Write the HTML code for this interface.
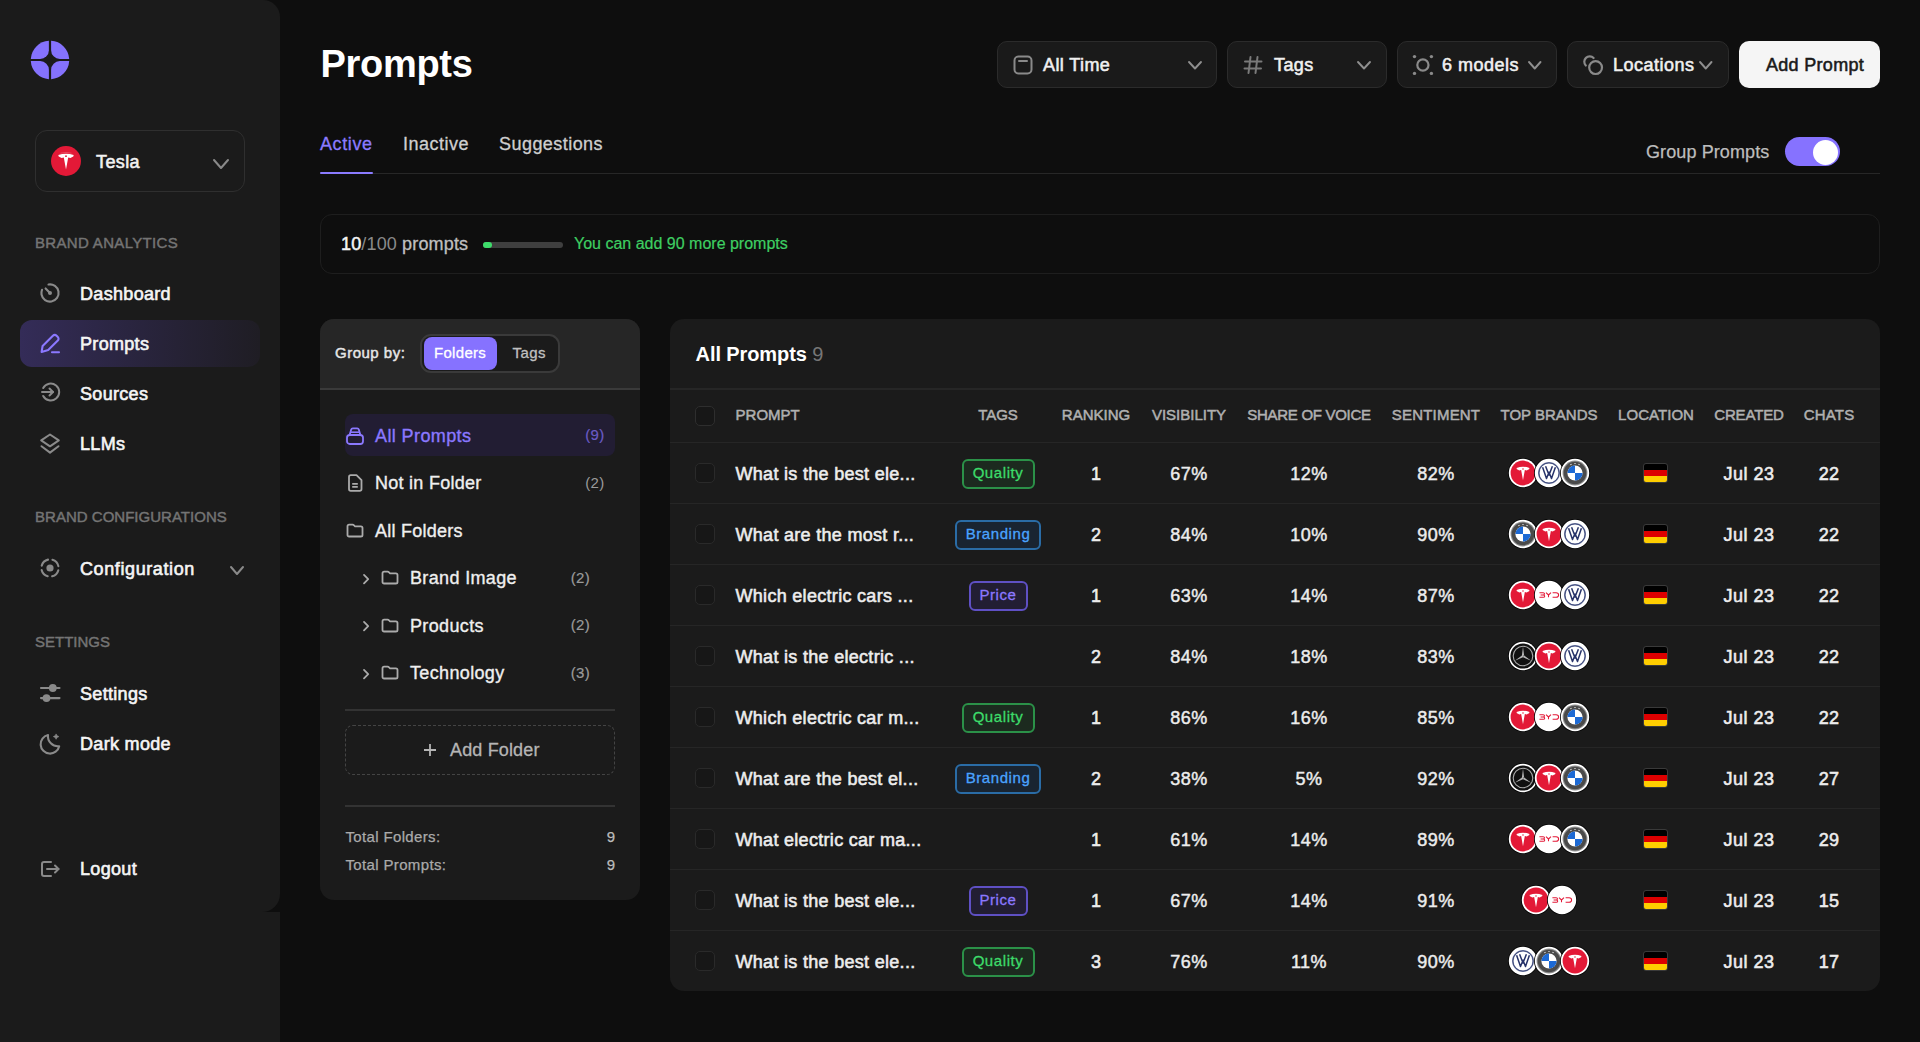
<!DOCTYPE html>
<html><head><meta charset="utf-8"><title>Prompts</title>
<style>
html,body{margin:0;padding:0}
body{width:1920px;height:1042px;background:#0e0e0e;overflow:hidden;position:relative;font-family:"Liberation Sans", sans-serif;-webkit-font-smoothing:antialiased}
svg{overflow:visible}
</style></head><body>
<div style="position:absolute;left:0px;top:912px;width:280px;height:130px;box-sizing:border-box;background:#1b1b1b"></div><div style="position:absolute;left:0px;top:0px;width:280px;height:912px;box-sizing:border-box;background:#1b1b1b;border-radius:0 17px 18px 0"></div><svg style="position:absolute;left:30px;top:40px" width="40" height="40" viewBox="0 0 40 40" fill="none"><g fill="#8572fd">
<path d="M18.9,0.8 A19.2,19.2 0 0 0 0.8,18.9 L10.2,18.9 A8.7,8.7 0 0 0 18.9,10.2 Z"/>
<path d="M21.1,0.8 A19.2,19.2 0 0 1 39.2,18.9 L29.8,18.9 A8.7,8.7 0 0 1 21.1,10.2 Z"/>
<path d="M18.9,39.2 A19.2,19.2 0 0 1 0.8,21.1 L10.2,21.1 A8.7,8.7 0 0 1 18.9,29.8 Z"/>
<path d="M21.1,39.2 A19.2,19.2 0 0 0 39.2,21.1 L29.8,21.1 A8.7,8.7 0 0 0 21.1,29.8 Z"/>
</g></svg><div style="position:absolute;left:35px;top:130px;width:210px;height:62px;box-sizing:border-box;border:1.5px solid #2f2f2f;border-radius:12px"></div><svg style="position:absolute;left:51px;top:146px" width="30" height="30" viewBox="0 0 30 30" fill="none"><circle cx="15" cy="15" r="15" fill="#e31937"/>
<path d="M7.3,8.9 Q15,6.4 22.7,8.9 L22.3,10.6 Q20.8,11.2 19.5,11.9 Q18,11.4 17.2,11.4 L15,23.5 L12.8,11.4 Q12,11.4 10.5,11.9 Q9.2,11.2 7.7,10.6 Z" fill="#fff"/>
<circle cx="15" cy="10.2" r="0.9" fill="#e31937"/>
<path d="M9.5,7.2 Q15,5.6 20.5,7.2" stroke="#fff" stroke-opacity="0.25" stroke-width="0.8"/></svg><div style="position:absolute;left:96px;top:152.76px;font-size:18px;font-weight:400;color:#f2f2f2;letter-spacing:0.4px;white-space:nowrap;line-height:1;-webkit-text-stroke:0.55px #f2f2f2;">Tesla</div><svg style="position:absolute;left:213px;top:159px" width="16" height="10" viewBox="0 0 16 10" fill="none"><polyline points="1,1 8.0,9 15,1" stroke="#8a8a8a" stroke-width="2" stroke-linecap="round" stroke-linejoin="round"/></svg><div style="position:absolute;left:35px;top:235.1px;font-size:15px;font-weight:400;color:#747474;letter-spacing:0.33px;white-space:nowrap;line-height:1;-webkit-text-stroke:0.45px #747474;">BRAND ANALYTICS</div><div style="position:absolute;left:35px;top:509.3px;font-size:15px;font-weight:400;color:#747474;letter-spacing:0.02px;white-space:nowrap;line-height:1;-webkit-text-stroke:0.45px #747474;">BRAND CONFIGURATIONS</div><div style="position:absolute;left:35px;top:634.1px;font-size:15px;font-weight:400;color:#747474;letter-spacing:0px;white-space:nowrap;line-height:1;-webkit-text-stroke:0.45px #747474;">SETTINGS</div><div style="position:absolute;left:20px;top:320px;width:240px;height:47px;box-sizing:border-box;border-radius:12px;background:linear-gradient(90deg,#342c58 0%,#2a2540 45%,#1f1d24 100%)"></div><svg style="position:absolute;left:40px;top:282.90000000000003px" width="20" height="22" viewBox="0 0 20 22" fill="none"><circle cx="10" cy="10" r="8.6" stroke="#8a8a8a" stroke-width="2.1" stroke-dasharray="45 9" stroke-linecap="round" transform="rotate(-100 10 10)"/><line x1="10" y1="10" x2="5.6" y2="5.4" stroke="#8a8a8a" stroke-width="2.1" stroke-linecap="round"/><circle cx="10" cy="10" r="2" fill="#8a8a8a"/></svg><div style="position:absolute;left:80px;top:285.36px;font-size:18px;font-weight:400;color:#f5f5f5;letter-spacing:0.32px;white-space:nowrap;line-height:1;-webkit-text-stroke:0.6px #f5f5f5;">Dashboard</div><svg style="position:absolute;left:40px;top:333.6px" width="20" height="22" viewBox="0 0 20 22" fill="none"><path d="M1.6,17.9 L2.6,12 L12.9,1.7 C13.9,0.7 15.6,0.7 16.6,1.7 L17.8,2.9 C18.8,3.9 18.8,5.6 17.8,6.6 L8.2,16 Z" stroke="#8b78ff" stroke-width="2.1" stroke-linejoin="round"/><line x1="12" y1="18.2" x2="19" y2="18.2" stroke="#8b78ff" stroke-width="2.1" stroke-linecap="round"/></svg><div style="position:absolute;left:80px;top:335.36px;font-size:18px;font-weight:400;color:#f5f5f5;letter-spacing:0.32px;white-space:nowrap;line-height:1;-webkit-text-stroke:0.6px #f5f5f5;">Prompts</div><svg style="position:absolute;left:40px;top:382.40000000000003px" width="20" height="22" viewBox="0 0 20 22" fill="none"><path d="M3.2,6 A8.5,8.5 0 1 1 3.2,14" stroke="#8a8a8a" stroke-width="2" stroke-linecap="round"/><line x1="2" y1="10" x2="13" y2="10" stroke="#8a8a8a" stroke-width="2" stroke-linecap="round"/><polyline points="9.5,6.5 13,10 9.5,13.5" stroke="#8a8a8a" stroke-width="2" stroke-linecap="round" stroke-linejoin="round"/></svg><div style="position:absolute;left:80px;top:385.36px;font-size:18px;font-weight:400;color:#f5f5f5;letter-spacing:0.32px;white-space:nowrap;line-height:1;-webkit-text-stroke:0.6px #f5f5f5;">Sources</div><svg style="position:absolute;left:40px;top:432.6px" width="20" height="22" viewBox="0 0 20 22" fill="none"><path d="M10,1.5 L18.8,7.4 L10,13.3 L1.2,7.4 Z" stroke="#8a8a8a" stroke-width="2" stroke-linejoin="round"/><polyline points="1.5,13.2 10,19.6 18.5,13.2" stroke="#8a8a8a" stroke-width="2" stroke-linejoin="round" stroke-linecap="round"/></svg><div style="position:absolute;left:80px;top:435.36px;font-size:18px;font-weight:400;color:#f5f5f5;letter-spacing:0.32px;white-space:nowrap;line-height:1;-webkit-text-stroke:0.6px #f5f5f5;">LLMs</div><svg style="position:absolute;left:40px;top:557.6px" width="20" height="22" viewBox="0 0 20 22" fill="none"><circle cx="10" cy="10" r="8.6" stroke="#8a8a8a" stroke-width="2.1" stroke-dasharray="9 4.5" stroke-dashoffset="11.25" stroke-linecap="round"/><circle cx="10" cy="10" r="3.6" fill="#8a8a8a"/></svg><div style="position:absolute;left:80px;top:560.36px;font-size:18px;font-weight:400;color:#f5f5f5;letter-spacing:0.6px;white-space:nowrap;line-height:1;-webkit-text-stroke:0.6px #f5f5f5;">Configuration</div><svg style="position:absolute;left:40px;top:683.2px" width="20" height="22" viewBox="0 0 20 22" fill="none"><line x1="1" y1="5" x2="19.5" y2="5" stroke="#8a8a8a" stroke-width="2.1" stroke-linecap="round"/><line x1="1" y1="15.1" x2="19.5" y2="15.1" stroke="#8a8a8a" stroke-width="2.1" stroke-linecap="round"/><circle cx="12.8" cy="5" r="3.9" fill="#8a8a8a"/><circle cx="6.5" cy="15.1" r="3.9" fill="#8a8a8a"/></svg><div style="position:absolute;left:80px;top:685.36px;font-size:18px;font-weight:400;color:#f5f5f5;letter-spacing:0.32px;white-space:nowrap;line-height:1;-webkit-text-stroke:0.6px #f5f5f5;">Settings</div><svg style="position:absolute;left:40px;top:732.8000000000001px" width="20" height="22" viewBox="0 0 20 22" fill="none"><path d="M8,2 A9.4,9.4 0 1 0 19.2,13.2 A10,10 0 0 1 8,2 Z" stroke="#8a8a8a" stroke-width="2.1" stroke-linejoin="round"/><path d="M16.1,0.9 Q16.6,3.1 18.9,3.6 Q16.6,4.1 16.1,6.3 Q15.6,4.1 13.3,3.6 Q15.6,3.1 16.1,0.9 Z" fill="#8a8a8a" stroke="#8a8a8a" stroke-width="0.6" stroke-linejoin="round"/></svg><div style="position:absolute;left:80px;top:735.36px;font-size:18px;font-weight:400;color:#f5f5f5;letter-spacing:0.32px;white-space:nowrap;line-height:1;-webkit-text-stroke:0.6px #f5f5f5;">Dark mode</div><svg style="position:absolute;left:40px;top:858.6px" width="20" height="22" viewBox="0 0 20 22" fill="none"><path d="M11,3 L4,3 C2.9,3 2,3.9 2,5 L2,15 C2,16.1 2.9,17 4,17 L11,17" stroke="#8a8a8a" stroke-width="2" stroke-linecap="round"/><line x1="7" y1="10" x2="18.5" y2="10" stroke="#8a8a8a" stroke-width="2" stroke-linecap="round"/><polyline points="15,6.5 18.5,10 15,13.5" stroke="#8a8a8a" stroke-width="2" stroke-linecap="round" stroke-linejoin="round"/></svg><div style="position:absolute;left:80px;top:860.36px;font-size:18px;font-weight:400;color:#f5f5f5;letter-spacing:0.32px;white-space:nowrap;line-height:1;-webkit-text-stroke:0.6px #f5f5f5;">Logout</div><svg style="position:absolute;left:230px;top:566px" width="14" height="9" viewBox="0 0 14 9" fill="none"><polyline points="1,1 7.0,8 13,1" stroke="#8a8a8a" stroke-width="2" stroke-linecap="round" stroke-linejoin="round"/></svg><div style="position:absolute;left:320.5px;top:44.83px;font-size:38px;font-weight:700;color:#ffffff;letter-spacing:-0.3px;white-space:nowrap;line-height:1;">Prompts</div><div style="position:absolute;left:997px;top:41px;width:220px;height:47px;box-sizing:border-box;background:#1a1a1a;border:1.5px solid #2b2b2b;border-radius:10px"></div><div style="position:absolute;left:1227px;top:41px;width:160px;height:47px;box-sizing:border-box;background:#1a1a1a;border:1.5px solid #2b2b2b;border-radius:10px"></div><div style="position:absolute;left:1397px;top:41px;width:160px;height:47px;box-sizing:border-box;background:#1a1a1a;border:1.5px solid #2b2b2b;border-radius:10px"></div><div style="position:absolute;left:1567px;top:41px;width:162px;height:47px;box-sizing:border-box;background:#1a1a1a;border:1.5px solid #2b2b2b;border-radius:10px"></div><div style="position:absolute;left:1739px;top:41px;width:141px;height:47px;box-sizing:border-box;background:#f5f5f5;border-radius:10px"></div><svg style="position:absolute;left:1013px;top:55px" width="20" height="20" viewBox="0 0 20 20" fill="none"><rect x="1.5" y="1.5" width="17" height="17" rx="4" stroke="#8a8a8a" stroke-width="2"/><line x1="6" y1="6" x2="14" y2="6" stroke="#8a8a8a" stroke-width="2" stroke-linecap="round"/></svg><svg style="position:absolute;left:1243px;top:55px" width="20" height="20" viewBox="0 0 20 20" fill="none"><path d="M7.5,2 L5.5,18 M14.5,2 L12.5,18 M2,6.5 L18.5,6.5 M1.5,13.5 L18,13.5" stroke="#7a7a7a" stroke-width="2" stroke-linecap="round"/></svg><svg style="position:absolute;left:1413px;top:55px" width="20" height="20" viewBox="0 0 20 20" fill="none"><circle cx="9.9" cy="10" r="5.6" stroke="#8a8a8a" stroke-width="2.2"/><circle cx="1.5" cy="1.6" r="1.7" fill="#8a8a8a"/><circle cx="18.4" cy="1.6" r="1.7" fill="#8a8a8a"/><circle cx="1.5" cy="18.4" r="1.7" fill="#8a8a8a"/><circle cx="18.4" cy="18.4" r="1.7" fill="#8a8a8a"/></svg><svg style="position:absolute;left:1583px;top:55px" width="20" height="20" viewBox="0 0 20 20" fill="none"><path d="M10.6,3 A5.4,5.4 0 1 0 2.8,10.5" stroke="#8a8a8a" stroke-width="2.2" stroke-linecap="round"/><circle cx="12.6" cy="12.6" r="6.4" stroke="#8a8a8a" stroke-width="2.2"/></svg><div style="position:absolute;left:1043px;top:55.76px;font-size:18px;font-weight:400;color:#f0f0f0;letter-spacing:0.4px;white-space:nowrap;line-height:1;-webkit-text-stroke:0.55px #f0f0f0;">All Time</div><div style="position:absolute;left:1274px;top:55.76px;font-size:18px;font-weight:400;color:#f0f0f0;letter-spacing:0.4px;white-space:nowrap;line-height:1;-webkit-text-stroke:0.55px #f0f0f0;">Tags</div><div style="position:absolute;left:1442px;top:55.76px;font-size:18px;font-weight:400;color:#f0f0f0;letter-spacing:0.5px;white-space:nowrap;line-height:1;-webkit-text-stroke:0.55px #f0f0f0;">6 models</div><div style="position:absolute;left:1613px;top:55.76px;font-size:18px;font-weight:400;color:#f0f0f0;letter-spacing:0.5px;white-space:nowrap;line-height:1;-webkit-text-stroke:0.55px #f0f0f0;">Locations</div><div style="position:absolute;left:1766px;top:55.76px;font-size:18px;font-weight:400;color:#1a1a1a;letter-spacing:0.3px;white-space:nowrap;line-height:1;-webkit-text-stroke:0.55px #1a1a1a;">Add Prompt</div><svg style="position:absolute;left:1187.5px;top:60.5px" width="14" height="8.5" viewBox="0 0 14 8.5" fill="none"><polyline points="1,1 7.0,7.5 13,1" stroke="#8f8f8f" stroke-width="1.9" stroke-linecap="round" stroke-linejoin="round"/></svg><svg style="position:absolute;left:1357px;top:60.5px" width="14" height="8.5" viewBox="0 0 14 8.5" fill="none"><polyline points="1,1 7.0,7.5 13,1" stroke="#8f8f8f" stroke-width="1.9" stroke-linecap="round" stroke-linejoin="round"/></svg><svg style="position:absolute;left:1527.5px;top:60.5px" width="13.5" height="8.5" viewBox="0 0 13.5 8.5" fill="none"><polyline points="1,1 6.75,7.5 12.5,1" stroke="#8f8f8f" stroke-width="1.9" stroke-linecap="round" stroke-linejoin="round"/></svg><svg style="position:absolute;left:1699px;top:60.5px" width="13.5" height="8.5" viewBox="0 0 13.5 8.5" fill="none"><polyline points="1,1 6.75,7.5 12.5,1" stroke="#8f8f8f" stroke-width="1.9" stroke-linecap="round" stroke-linejoin="round"/></svg><div style="position:absolute;left:320px;top:134.96px;font-size:18px;font-weight:400;color:#8b7bff;letter-spacing:0.6px;white-space:nowrap;line-height:1;-webkit-text-stroke:0.3px #8b7bff;">Active</div><div style="position:absolute;left:403px;top:134.96px;font-size:18px;font-weight:400;color:#cfcfcf;letter-spacing:0.5px;white-space:nowrap;line-height:1;-webkit-text-stroke:0.3px #cfcfcf;">Inactive</div><div style="position:absolute;left:499px;top:134.96px;font-size:18px;font-weight:400;color:#cfcfcf;letter-spacing:0.45px;white-space:nowrap;line-height:1;-webkit-text-stroke:0.3px #cfcfcf;">Suggestions</div><div style="position:absolute;left:320px;top:172.5px;width:1560px;height:1.5px;box-sizing:border-box;background:#272727"></div><div style="position:absolute;left:320px;top:171.7px;width:53px;height:2.5px;box-sizing:border-box;background:#8b7bff;border-radius:2px"></div><div style="position:absolute;left:1646px;top:142.66px;font-size:18px;font-weight:400;color:#bdbdbd;letter-spacing:0.1px;white-space:nowrap;line-height:1;-webkit-text-stroke:0.25px #bdbdbd;">Group Prompts</div><div style="position:absolute;left:1785px;top:137px;width:55px;height:29px;box-sizing:border-box;background:#8672ff;border-radius:15px"></div><div style="position:absolute;left:1813px;top:139.5px;width:25px;height:25px;box-sizing:border-box;background:#fff;border-radius:50%"></div><div style="position:absolute;left:320px;top:214px;width:1560px;height:60px;box-sizing:border-box;border:1.5px solid #1e1e1e;border-radius:12px;background:#0e0e0e"></div><div style="position:absolute;left:341px;top:234.76px;font-size:18px;font-weight:400;color:#fff;letter-spacing:0.15px;white-space:nowrap;line-height:1;"><span style="color:#f5f5f5;-webkit-text-stroke:0.5px #f5f5f5">10</span><span style="color:#8a8a8a">/100</span><span style="color:#c0c0c0;-webkit-text-stroke:0.3px #c0c0c0"> prompts</span></div><div style="position:absolute;left:483px;top:241.5px;width:80px;height:6px;box-sizing:border-box;background:#3f3f3f;border-radius:3px"></div><div style="position:absolute;left:483px;top:241.5px;width:9px;height:6px;box-sizing:border-box;background:#3ddc6a;border-radius:3px"></div><div style="position:absolute;left:574px;top:235.96px;font-size:16px;font-weight:400;color:#3ecf62;letter-spacing:0px;white-space:nowrap;line-height:1;-webkit-text-stroke:0.2px #3ecf62;">You can add 90 more prompts</div><div style="position:absolute;left:320px;top:319px;width:320px;height:581px;box-sizing:border-box;background:#1b1b1b;border-radius:14px;overflow:hidden"></div><div style="position:absolute;left:320px;top:319px;width:320px;height:69px;box-sizing:border-box;background:#262626;border-radius:14px 14px 0 0"></div><div style="position:absolute;left:320px;top:387.5px;width:320px;height:2px;box-sizing:border-box;background:#3a3a3a"></div><div style="position:absolute;left:335px;top:344.6px;font-size:15px;font-weight:400;color:#e6e6e6;letter-spacing:0.5px;white-space:nowrap;line-height:1;-webkit-text-stroke:0.45px #e6e6e6;">Group by:</div><div style="position:absolute;left:420px;top:334px;width:140px;height:39px;box-sizing:border-box;background:#1b1b1b;border:2px solid #3a3a3a;border-radius:11px"></div><div style="position:absolute;left:424px;top:337px;width:73px;height:33px;box-sizing:border-box;background:#8672ff;border-radius:8px"></div><div style="position:absolute;left:434px;top:345.3px;font-size:15px;font-weight:400;color:#ffffff;letter-spacing:0.3px;white-space:nowrap;line-height:1;-webkit-text-stroke:0.3px #ffffff;">Folders</div><div style="position:absolute;left:512.5px;top:345.3px;font-size:15px;font-weight:400;color:#c0c0c0;letter-spacing:0.4px;white-space:nowrap;line-height:1;-webkit-text-stroke:0.3px #c0c0c0;">Tags</div><div style="position:absolute;left:345px;top:414px;width:270px;height:42px;box-sizing:border-box;background:#221d33;border-radius:8px"></div><svg style="position:absolute;left:346px;top:427px" width="18" height="18" viewBox="0 0 18 18" fill="none"><path d="M3.6,8 L5.2,2.6 C5.4,1.9 6,1.4 6.8,1.4 L11.2,1.4 C12,1.4 12.6,1.9 12.8,2.6 L14.4,8" stroke="#8b78ff" stroke-width="1.8" stroke-linejoin="round"/><line x1="4.4" y1="5.2" x2="13.6" y2="5.2" stroke="#8b78ff" stroke-width="1.6"/><rect x="1" y="8" width="16" height="9" rx="2.8" stroke="#8b78ff" stroke-width="1.8"/></svg><div style="position:absolute;left:375px;top:426.76px;font-size:18px;font-weight:400;color:#8b78ff;letter-spacing:0.4px;white-space:nowrap;line-height:1;-webkit-text-stroke:0.35px #8b78ff;">All Prompts</div><div style="position:absolute;left:404.5px;width:200px;text-align:right;top:427.3px;font-size:15px;font-weight:400;color:#6a5bc5;letter-spacing:0.3px;white-space:nowrap;line-height:1;-webkit-text-stroke:0.2px #6a5bc5;">(9)</div><svg style="position:absolute;left:347px;top:474px" width="16" height="18" viewBox="0 0 16 18" fill="none"><path d="M2,3 C2,2 2.8,1.2 3.8,1.2 L9.5,1.2 L14.5,6.2 L14.5,15 C14.5,16 13.7,16.8 12.7,16.8 L3.8,16.8 C2.8,16.8 2,16 2,15 Z" stroke="#ababab" stroke-width="1.8" stroke-linejoin="round"/><path d="M5.2,9.8 L10.8,9.8 M5.2,12.8 L10.8,12.8" stroke="#ababab" stroke-width="1.7"/></svg><div style="position:absolute;left:375px;top:473.76px;font-size:18px;font-weight:400;color:#efefef;letter-spacing:0.27px;white-space:nowrap;line-height:1;-webkit-text-stroke:0.35px #efefef;">Not in Folder</div><div style="position:absolute;left:404.5px;width:200px;text-align:right;top:474.8px;font-size:15px;font-weight:400;color:#9a9a9a;letter-spacing:0.3px;white-space:nowrap;line-height:1;">(2)</div><svg style="position:absolute;left:346px;top:522px" width="18" height="16" viewBox="0 0 18 16" fill="none"><path d="M1.5,4.3 C1.5,3.4 2.2,2.7 3.1,2.7 L6.6,2.7 C7.2,2.7 7.6,2.9 8,3.3 L8.8,4.3 L14.9,4.3 C15.8,4.3 16.5,5 16.5,5.9 L16.5,12.9 C16.5,13.8 15.8,14.5 14.9,14.5 L3.1,14.5 C2.2,14.5 1.5,13.8 1.5,12.9 Z" stroke="#ababab" stroke-width="1.8" stroke-linejoin="round"/></svg><div style="position:absolute;left:375px;top:521.76px;font-size:18px;font-weight:400;color:#efefef;letter-spacing:0.25px;white-space:nowrap;line-height:1;-webkit-text-stroke:0.35px #efefef;">All Folders</div><svg style="position:absolute;left:361px;top:571.6999999999999px" width="10" height="14" viewBox="0 0 10 14" fill="none"><polyline points="3,2.9 7.2,7.1 3,11.3" stroke="#ababab" stroke-width="1.8" stroke-linecap="round" stroke-linejoin="round"/></svg><svg style="position:absolute;left:381px;top:569.3px" width="18" height="16" viewBox="0 0 18 16" fill="none"><path d="M1.5,4.3 C1.5,3.4 2.2,2.7 3.1,2.7 L6.6,2.7 C7.2,2.7 7.6,2.9 8,3.3 L8.8,4.3 L14.9,4.3 C15.8,4.3 16.5,5 16.5,5.9 L16.5,12.9 C16.5,13.8 15.8,14.5 14.9,14.5 L3.1,14.5 C2.2,14.5 1.5,13.8 1.5,12.9 Z" stroke="#ababab" stroke-width="1.8" stroke-linejoin="round"/></svg><div style="position:absolute;left:410px;top:569.06px;font-size:18px;font-weight:400;color:#efefef;letter-spacing:0.35px;white-space:nowrap;line-height:1;-webkit-text-stroke:0.35px #efefef;">Brand Image</div><div style="position:absolute;left:390px;width:200px;text-align:right;top:569.6px;font-size:15px;font-weight:400;color:#9a9a9a;letter-spacing:0.3px;white-space:nowrap;line-height:1;-webkit-text-stroke:0.2px #9a9a9a;">(2)</div><svg style="position:absolute;left:361px;top:619.1999999999999px" width="10" height="14" viewBox="0 0 10 14" fill="none"><polyline points="3,2.9 7.2,7.1 3,11.3" stroke="#ababab" stroke-width="1.8" stroke-linecap="round" stroke-linejoin="round"/></svg><svg style="position:absolute;left:381px;top:616.8px" width="18" height="16" viewBox="0 0 18 16" fill="none"><path d="M1.5,4.3 C1.5,3.4 2.2,2.7 3.1,2.7 L6.6,2.7 C7.2,2.7 7.6,2.9 8,3.3 L8.8,4.3 L14.9,4.3 C15.8,4.3 16.5,5 16.5,5.9 L16.5,12.9 C16.5,13.8 15.8,14.5 14.9,14.5 L3.1,14.5 C2.2,14.5 1.5,13.8 1.5,12.9 Z" stroke="#ababab" stroke-width="1.8" stroke-linejoin="round"/></svg><div style="position:absolute;left:410px;top:616.56px;font-size:18px;font-weight:400;color:#efefef;letter-spacing:0.35px;white-space:nowrap;line-height:1;-webkit-text-stroke:0.35px #efefef;">Products</div><div style="position:absolute;left:390px;width:200px;text-align:right;top:617.1px;font-size:15px;font-weight:400;color:#9a9a9a;letter-spacing:0.3px;white-space:nowrap;line-height:1;-webkit-text-stroke:0.2px #9a9a9a;">(2)</div><svg style="position:absolute;left:361px;top:666.6999999999999px" width="10" height="14" viewBox="0 0 10 14" fill="none"><polyline points="3,2.9 7.2,7.1 3,11.3" stroke="#ababab" stroke-width="1.8" stroke-linecap="round" stroke-linejoin="round"/></svg><svg style="position:absolute;left:381px;top:664.3px" width="18" height="16" viewBox="0 0 18 16" fill="none"><path d="M1.5,4.3 C1.5,3.4 2.2,2.7 3.1,2.7 L6.6,2.7 C7.2,2.7 7.6,2.9 8,3.3 L8.8,4.3 L14.9,4.3 C15.8,4.3 16.5,5 16.5,5.9 L16.5,12.9 C16.5,13.8 15.8,14.5 14.9,14.5 L3.1,14.5 C2.2,14.5 1.5,13.8 1.5,12.9 Z" stroke="#ababab" stroke-width="1.8" stroke-linejoin="round"/></svg><div style="position:absolute;left:410px;top:664.06px;font-size:18px;font-weight:400;color:#efefef;letter-spacing:0.35px;white-space:nowrap;line-height:1;-webkit-text-stroke:0.35px #efefef;">Technology</div><div style="position:absolute;left:390px;width:200px;text-align:right;top:664.6px;font-size:15px;font-weight:400;color:#9a9a9a;letter-spacing:0.3px;white-space:nowrap;line-height:1;-webkit-text-stroke:0.2px #9a9a9a;">(3)</div><div style="position:absolute;left:345px;top:709px;width:270px;height:1.5px;box-sizing:border-box;background:#333"></div><div style="position:absolute;left:345px;top:725px;width:270px;height:50px;box-sizing:border-box;border:1.5px dashed #444;border-radius:8px"></div><svg style="position:absolute;left:423px;top:743px" width="14" height="14" viewBox="0 0 14 14" fill="none"><path d="M7,1 L7,13 M1,7 L13,7" stroke="#b5b5b5" stroke-width="1.8"/></svg><div style="position:absolute;left:450px;top:741.26px;font-size:18px;font-weight:400;color:#b5b5b5;letter-spacing:0.15px;white-space:nowrap;line-height:1;-webkit-text-stroke:0.3px #b5b5b5;">Add Folder</div><div style="position:absolute;left:345px;top:805px;width:270px;height:1.5px;box-sizing:border-box;background:#333"></div><div style="position:absolute;left:345.5px;top:829.3px;font-size:15px;font-weight:400;color:#aaaaaa;letter-spacing:0.35px;white-space:nowrap;line-height:1;-webkit-text-stroke:0.25px #aaaaaa;">Total Folders:</div><div style="position:absolute;left:345.5px;top:856.7px;font-size:15px;font-weight:400;color:#aaaaaa;letter-spacing:0.35px;white-space:nowrap;line-height:1;-webkit-text-stroke:0.25px #aaaaaa;">Total Prompts:</div><div style="position:absolute;left:415px;width:200px;text-align:right;top:829.3px;font-size:15px;font-weight:400;color:#bbbbbb;letter-spacing:0px;white-space:nowrap;line-height:1;-webkit-text-stroke:0.25px #bbbbbb;">9</div><div style="position:absolute;left:415px;width:200px;text-align:right;top:856.7px;font-size:15px;font-weight:400;color:#bbbbbb;letter-spacing:0px;white-space:nowrap;line-height:1;-webkit-text-stroke:0.25px #bbbbbb;">9</div><div style="position:absolute;left:670px;top:319px;width:1210px;height:672px;box-sizing:border-box;background:#1b1b1b;border-radius:14px"></div><div style="position:absolute;left:695.6px;top:344.27px;font-size:20px;font-weight:700;color:#ffffff;letter-spacing:-0.1px;white-space:nowrap;line-height:1;">All Prompts <span style="color:#767676;font-weight:400">9</span></div><div style="position:absolute;left:670px;top:388px;width:1210px;height:2px;box-sizing:border-box;background:#262626"></div><div style="position:absolute;left:695px;top:406px;width:20px;height:20px;box-sizing:border-box;border:1.5px solid #2e2e2e;border-radius:5px;background:#171717"></div><div style="position:absolute;left:735.6px;top:407.1px;font-size:15px;font-weight:400;color:#b0b0b0;letter-spacing:0px;white-space:nowrap;line-height:1;-webkit-text-stroke:0.5px #b0b0b0;">PROMPT</div><div style="position:absolute;left:898.0px;width:200px;text-align:center;top:407.1px;font-size:15px;font-weight:400;color:#b0b0b0;letter-spacing:0px;white-space:nowrap;line-height:1;-webkit-text-stroke:0.5px #b0b0b0;">TAGS</div><div style="position:absolute;left:996.0px;width:200px;text-align:center;top:407.1px;font-size:15px;font-weight:400;color:#b0b0b0;letter-spacing:0px;white-space:nowrap;line-height:1;-webkit-text-stroke:0.5px #b0b0b0;">RANKING</div><div style="position:absolute;left:1089.0px;width:200px;text-align:center;top:407.1px;font-size:15px;font-weight:400;color:#b0b0b0;letter-spacing:0px;white-space:nowrap;line-height:1;-webkit-text-stroke:0.5px #b0b0b0;">VISIBILITY</div><div style="position:absolute;left:1209.0px;width:200px;text-align:center;top:407.1px;font-size:15px;font-weight:400;color:#b0b0b0;letter-spacing:-0.3px;white-space:nowrap;line-height:1;-webkit-text-stroke:0.5px #b0b0b0;">SHARE OF VOICE</div><div style="position:absolute;left:1336.0px;width:200px;text-align:center;top:407.1px;font-size:15px;font-weight:400;color:#b0b0b0;letter-spacing:0.2px;white-space:nowrap;line-height:1;-webkit-text-stroke:0.5px #b0b0b0;">SENTIMENT</div><div style="position:absolute;left:1449.0px;width:200px;text-align:center;top:407.1px;font-size:15px;font-weight:400;color:#b0b0b0;letter-spacing:0px;white-space:nowrap;line-height:1;-webkit-text-stroke:0.5px #b0b0b0;">TOP BRANDS</div><div style="position:absolute;left:1556.0px;width:200px;text-align:center;top:407.1px;font-size:15px;font-weight:400;color:#b0b0b0;letter-spacing:0.05px;white-space:nowrap;line-height:1;-webkit-text-stroke:0.5px #b0b0b0;">LOCATION</div><div style="position:absolute;left:1649.0px;width:200px;text-align:center;top:407.1px;font-size:15px;font-weight:400;color:#b0b0b0;letter-spacing:-0.15px;white-space:nowrap;line-height:1;-webkit-text-stroke:0.5px #b0b0b0;">CREATED</div><div style="position:absolute;left:1729.0px;width:200px;text-align:center;top:407.1px;font-size:15px;font-weight:400;color:#b0b0b0;letter-spacing:0.2px;white-space:nowrap;line-height:1;-webkit-text-stroke:0.5px #b0b0b0;">CHATS</div><div style="position:absolute;left:670px;top:441.5px;width:1210px;height:1.5px;box-sizing:border-box;background:#262626"></div><div style="position:absolute;left:695px;top:463px;width:20px;height:20px;box-sizing:border-box;border:1.5px solid #2a2a2a;border-radius:5px;background:#171717"></div><div style="position:absolute;left:735.5px;top:464.76px;font-size:18px;font-weight:400;color:#ededed;letter-spacing:0.3px;white-space:nowrap;line-height:1;-webkit-text-stroke:0.55px #ededed;">What is the best ele...</div><div style="position:absolute;left:961.5px;top:458.5px;width:73px;height:30px;box-sizing:border-box;border:2px solid #2b9148;background:#1c2a1f;border-radius:6px"></div><div style="position:absolute;left:898.0px;width:200px;text-align:center;top:464.9px;font-size:15px;font-weight:400;color:#3ddc6a;letter-spacing:0.58px;white-space:nowrap;line-height:1;-webkit-text-stroke:0.3px #3ddc6a;">Quality</div><div style="position:absolute;left:996.0px;width:200px;text-align:center;top:464.76px;font-size:18px;font-weight:400;color:#ededed;letter-spacing:0px;white-space:nowrap;line-height:1;-webkit-text-stroke:0.55px #ededed;">1</div><div style="position:absolute;left:1089.0px;width:200px;text-align:center;top:464.76px;font-size:18px;font-weight:400;color:#ededed;letter-spacing:0.45px;white-space:nowrap;line-height:1;-webkit-text-stroke:0.45px #ededed;">67%</div><div style="position:absolute;left:1209.0px;width:200px;text-align:center;top:464.76px;font-size:18px;font-weight:400;color:#ededed;letter-spacing:0.45px;white-space:nowrap;line-height:1;-webkit-text-stroke:0.45px #ededed;">12%</div><div style="position:absolute;left:1336.0px;width:200px;text-align:center;top:464.76px;font-size:18px;font-weight:400;color:#ededed;letter-spacing:0.45px;white-space:nowrap;line-height:1;-webkit-text-stroke:0.45px #ededed;">82%</div><svg style="position:absolute;left:1508.2px;top:458px;z-index:0" width="30" height="30" viewBox="0 0 30 30" fill="none"><circle cx="15" cy="15" r="15" fill="#000"/><circle cx="15" cy="15" r="14.2" fill="#fff"/><circle cx="15" cy="15" r="12.4" fill="#e31937"/>
<g transform="translate(15 15) scale(0.84) translate(-15 -15)"><path d="M7.3,8.9 Q15,6.4 22.7,8.9 L22.3,10.6 Q20.8,11.2 19.5,11.9 Q18,11.4 17.2,11.4 L15,23.5 L12.8,11.4 Q12,11.4 10.5,11.9 Q9.2,11.2 7.7,10.6 Z" fill="#fff"/>
<circle cx="15" cy="10.2" r="0.9" fill="#e31937"/></g></svg><svg style="position:absolute;left:1534.0px;top:458px;z-index:1" width="30" height="30" viewBox="0 0 30 30" fill="none"><circle cx="15" cy="15" r="15" fill="#000"/><circle cx="15" cy="15" r="14.2" fill="#fff"/><circle cx="15" cy="15" r="10.2" stroke="#8a93b5" stroke-width="1.6"/><circle cx="15" cy="15" r="10.2" stroke="#27336a" stroke-width="0.8"/>
<path d="M8.6,9.2 L12.5,20.5 L15,14.2 L17.5,20.5 L21.4,9.2 M11.6,8.2 L15,17 L18.4,8.2" stroke="#27336a" stroke-width="1.5" stroke-linejoin="round"/></svg><svg style="position:absolute;left:1559.8px;top:458px;z-index:2" width="30" height="30" viewBox="0 0 30 30" fill="none"><circle cx="15" cy="15" r="15" fill="#000"/><circle cx="15" cy="15" r="14.2" fill="#fff"/><circle cx="15" cy="15" r="12.4" fill="#8c8c8c"/><circle cx="15" cy="15" r="11.3" fill="#4a4a4a"/>
<path d="M10.3,6.9 l1.3,-0.8 M14.4,5.5 l1.2,0 M18.4,6.1 l1.3,0.8" stroke="#e5e5e5" stroke-width="1.1"/>
<circle cx="15" cy="15" r="7.6" fill="#fff"/>
<path d="M15,15 L15,7.4 A7.6,7.6 0 0 0 7.4,15 Z" fill="#1c69d4"/><path d="M15,15 L15,22.6 A7.6,7.6 0 0 0 22.6,15 Z" fill="#1c69d4"/></svg><div style="position:absolute;left:1643px;top:463px;width:25px;height:20px;box-sizing:border-box;border:1px solid #3a3a3a;border-radius:3px;overflow:hidden;background:linear-gradient(#000 0 33.3%,#dd0000 33.3% 66.6%,#ffce00 66.6%)"></div><div style="position:absolute;left:1649.0px;width:200px;text-align:center;top:464.76px;font-size:18px;font-weight:400;color:#ededed;letter-spacing:0.5px;white-space:nowrap;line-height:1;-webkit-text-stroke:0.55px #ededed;">Jul 23</div><div style="position:absolute;left:1729.0px;width:200px;text-align:center;top:464.76px;font-size:18px;font-weight:400;color:#ededed;letter-spacing:0.3px;white-space:nowrap;line-height:1;-webkit-text-stroke:0.55px #ededed;">22</div><div style="position:absolute;left:670px;top:502.5px;width:1210px;height:1.5px;box-sizing:border-box;background:#262626"></div><div style="position:absolute;left:695px;top:524px;width:20px;height:20px;box-sizing:border-box;border:1.5px solid #2a2a2a;border-radius:5px;background:#171717"></div><div style="position:absolute;left:735.5px;top:525.76px;font-size:18px;font-weight:400;color:#ededed;letter-spacing:0.3px;white-space:nowrap;line-height:1;-webkit-text-stroke:0.55px #ededed;">What are the most r...</div><div style="position:absolute;left:955.0px;top:519.5px;width:86px;height:30px;box-sizing:border-box;border:2px solid #2a6ca6;background:#192431;border-radius:6px"></div><div style="position:absolute;left:898.0px;width:200px;text-align:center;top:525.9px;font-size:15px;font-weight:400;color:#4aa3ff;letter-spacing:0.58px;white-space:nowrap;line-height:1;-webkit-text-stroke:0.3px #4aa3ff;">Branding</div><div style="position:absolute;left:996.0px;width:200px;text-align:center;top:525.76px;font-size:18px;font-weight:400;color:#ededed;letter-spacing:0px;white-space:nowrap;line-height:1;-webkit-text-stroke:0.55px #ededed;">2</div><div style="position:absolute;left:1089.0px;width:200px;text-align:center;top:525.76px;font-size:18px;font-weight:400;color:#ededed;letter-spacing:0.45px;white-space:nowrap;line-height:1;-webkit-text-stroke:0.45px #ededed;">84%</div><div style="position:absolute;left:1209.0px;width:200px;text-align:center;top:525.76px;font-size:18px;font-weight:400;color:#ededed;letter-spacing:0.45px;white-space:nowrap;line-height:1;-webkit-text-stroke:0.45px #ededed;">10%</div><div style="position:absolute;left:1336.0px;width:200px;text-align:center;top:525.76px;font-size:18px;font-weight:400;color:#ededed;letter-spacing:0.45px;white-space:nowrap;line-height:1;-webkit-text-stroke:0.45px #ededed;">90%</div><svg style="position:absolute;left:1508.2px;top:519px;z-index:0" width="30" height="30" viewBox="0 0 30 30" fill="none"><circle cx="15" cy="15" r="15" fill="#000"/><circle cx="15" cy="15" r="14.2" fill="#fff"/><circle cx="15" cy="15" r="12.4" fill="#8c8c8c"/><circle cx="15" cy="15" r="11.3" fill="#4a4a4a"/>
<path d="M10.3,6.9 l1.3,-0.8 M14.4,5.5 l1.2,0 M18.4,6.1 l1.3,0.8" stroke="#e5e5e5" stroke-width="1.1"/>
<circle cx="15" cy="15" r="7.6" fill="#fff"/>
<path d="M15,15 L15,7.4 A7.6,7.6 0 0 0 7.4,15 Z" fill="#1c69d4"/><path d="M15,15 L15,22.6 A7.6,7.6 0 0 0 22.6,15 Z" fill="#1c69d4"/></svg><svg style="position:absolute;left:1534.0px;top:519px;z-index:1" width="30" height="30" viewBox="0 0 30 30" fill="none"><circle cx="15" cy="15" r="15" fill="#000"/><circle cx="15" cy="15" r="14.2" fill="#fff"/><circle cx="15" cy="15" r="12.4" fill="#e31937"/>
<g transform="translate(15 15) scale(0.84) translate(-15 -15)"><path d="M7.3,8.9 Q15,6.4 22.7,8.9 L22.3,10.6 Q20.8,11.2 19.5,11.9 Q18,11.4 17.2,11.4 L15,23.5 L12.8,11.4 Q12,11.4 10.5,11.9 Q9.2,11.2 7.7,10.6 Z" fill="#fff"/>
<circle cx="15" cy="10.2" r="0.9" fill="#e31937"/></g></svg><svg style="position:absolute;left:1559.8px;top:519px;z-index:2" width="30" height="30" viewBox="0 0 30 30" fill="none"><circle cx="15" cy="15" r="15" fill="#000"/><circle cx="15" cy="15" r="14.2" fill="#fff"/><circle cx="15" cy="15" r="10.2" stroke="#8a93b5" stroke-width="1.6"/><circle cx="15" cy="15" r="10.2" stroke="#27336a" stroke-width="0.8"/>
<path d="M8.6,9.2 L12.5,20.5 L15,14.2 L17.5,20.5 L21.4,9.2 M11.6,8.2 L15,17 L18.4,8.2" stroke="#27336a" stroke-width="1.5" stroke-linejoin="round"/></svg><div style="position:absolute;left:1643px;top:524px;width:25px;height:20px;box-sizing:border-box;border:1px solid #3a3a3a;border-radius:3px;overflow:hidden;background:linear-gradient(#000 0 33.3%,#dd0000 33.3% 66.6%,#ffce00 66.6%)"></div><div style="position:absolute;left:1649.0px;width:200px;text-align:center;top:525.76px;font-size:18px;font-weight:400;color:#ededed;letter-spacing:0.5px;white-space:nowrap;line-height:1;-webkit-text-stroke:0.55px #ededed;">Jul 23</div><div style="position:absolute;left:1729.0px;width:200px;text-align:center;top:525.76px;font-size:18px;font-weight:400;color:#ededed;letter-spacing:0.3px;white-space:nowrap;line-height:1;-webkit-text-stroke:0.55px #ededed;">22</div><div style="position:absolute;left:670px;top:563.5px;width:1210px;height:1.5px;box-sizing:border-box;background:#262626"></div><div style="position:absolute;left:695px;top:585px;width:20px;height:20px;box-sizing:border-box;border:1.5px solid #2a2a2a;border-radius:5px;background:#171717"></div><div style="position:absolute;left:735.5px;top:586.76px;font-size:18px;font-weight:400;color:#ededed;letter-spacing:0.3px;white-space:nowrap;line-height:1;-webkit-text-stroke:0.55px #ededed;">Which electric cars ...</div><div style="position:absolute;left:968.5px;top:580.5px;width:59px;height:30px;box-sizing:border-box;border:2px solid #5f50c4;background:#221e33;border-radius:6px"></div><div style="position:absolute;left:898.0px;width:200px;text-align:center;top:586.9px;font-size:15px;font-weight:400;color:#8b78ff;letter-spacing:0.58px;white-space:nowrap;line-height:1;-webkit-text-stroke:0.3px #8b78ff;">Price</div><div style="position:absolute;left:996.0px;width:200px;text-align:center;top:586.76px;font-size:18px;font-weight:400;color:#ededed;letter-spacing:0px;white-space:nowrap;line-height:1;-webkit-text-stroke:0.55px #ededed;">1</div><div style="position:absolute;left:1089.0px;width:200px;text-align:center;top:586.76px;font-size:18px;font-weight:400;color:#ededed;letter-spacing:0.45px;white-space:nowrap;line-height:1;-webkit-text-stroke:0.45px #ededed;">63%</div><div style="position:absolute;left:1209.0px;width:200px;text-align:center;top:586.76px;font-size:18px;font-weight:400;color:#ededed;letter-spacing:0.45px;white-space:nowrap;line-height:1;-webkit-text-stroke:0.45px #ededed;">14%</div><div style="position:absolute;left:1336.0px;width:200px;text-align:center;top:586.76px;font-size:18px;font-weight:400;color:#ededed;letter-spacing:0.45px;white-space:nowrap;line-height:1;-webkit-text-stroke:0.45px #ededed;">87%</div><svg style="position:absolute;left:1508.2px;top:580px;z-index:0" width="30" height="30" viewBox="0 0 30 30" fill="none"><circle cx="15" cy="15" r="15" fill="#000"/><circle cx="15" cy="15" r="14.2" fill="#fff"/><circle cx="15" cy="15" r="12.4" fill="#e31937"/>
<g transform="translate(15 15) scale(0.84) translate(-15 -15)"><path d="M7.3,8.9 Q15,6.4 22.7,8.9 L22.3,10.6 Q20.8,11.2 19.5,11.9 Q18,11.4 17.2,11.4 L15,23.5 L12.8,11.4 Q12,11.4 10.5,11.9 Q9.2,11.2 7.7,10.6 Z" fill="#fff"/>
<circle cx="15" cy="10.2" r="0.9" fill="#e31937"/></g></svg><svg style="position:absolute;left:1534.0px;top:580px;z-index:1" width="30" height="30" viewBox="0 0 30 30" fill="none"><circle cx="15" cy="15" r="15" fill="#000"/><circle cx="15" cy="15" r="14.2" fill="#fff"/>
<path d="M5.4,12.7 L9.2,12.7 Q10.5,12.7 10.5,13.85 Q10.5,15 9.2,15 L6.6,15 M9.2,15 Q10.7,15 10.7,16.15 Q10.7,17.3 9.2,17.3 L5.4,17.3 M12,12.7 L14.5,15 L17,12.7 M14.5,15 L14.5,17.3 M18.6,12.7 L22.1,12.7 Q24.6,12.7 24.6,15 Q24.6,17.3 22.1,17.3 L18.6,17.3" stroke="#e31937" stroke-width="1.05" stroke-linejoin="round"/></svg><svg style="position:absolute;left:1559.8px;top:580px;z-index:2" width="30" height="30" viewBox="0 0 30 30" fill="none"><circle cx="15" cy="15" r="15" fill="#000"/><circle cx="15" cy="15" r="14.2" fill="#fff"/><circle cx="15" cy="15" r="10.2" stroke="#8a93b5" stroke-width="1.6"/><circle cx="15" cy="15" r="10.2" stroke="#27336a" stroke-width="0.8"/>
<path d="M8.6,9.2 L12.5,20.5 L15,14.2 L17.5,20.5 L21.4,9.2 M11.6,8.2 L15,17 L18.4,8.2" stroke="#27336a" stroke-width="1.5" stroke-linejoin="round"/></svg><div style="position:absolute;left:1643px;top:585px;width:25px;height:20px;box-sizing:border-box;border:1px solid #3a3a3a;border-radius:3px;overflow:hidden;background:linear-gradient(#000 0 33.3%,#dd0000 33.3% 66.6%,#ffce00 66.6%)"></div><div style="position:absolute;left:1649.0px;width:200px;text-align:center;top:586.76px;font-size:18px;font-weight:400;color:#ededed;letter-spacing:0.5px;white-space:nowrap;line-height:1;-webkit-text-stroke:0.55px #ededed;">Jul 23</div><div style="position:absolute;left:1729.0px;width:200px;text-align:center;top:586.76px;font-size:18px;font-weight:400;color:#ededed;letter-spacing:0.3px;white-space:nowrap;line-height:1;-webkit-text-stroke:0.55px #ededed;">22</div><div style="position:absolute;left:670px;top:624.5px;width:1210px;height:1.5px;box-sizing:border-box;background:#262626"></div><div style="position:absolute;left:695px;top:646px;width:20px;height:20px;box-sizing:border-box;border:1.5px solid #2a2a2a;border-radius:5px;background:#171717"></div><div style="position:absolute;left:735.5px;top:647.76px;font-size:18px;font-weight:400;color:#ededed;letter-spacing:0.3px;white-space:nowrap;line-height:1;-webkit-text-stroke:0.55px #ededed;">What is the electric ...</div><div style="position:absolute;left:996.0px;width:200px;text-align:center;top:647.76px;font-size:18px;font-weight:400;color:#ededed;letter-spacing:0px;white-space:nowrap;line-height:1;-webkit-text-stroke:0.55px #ededed;">2</div><div style="position:absolute;left:1089.0px;width:200px;text-align:center;top:647.76px;font-size:18px;font-weight:400;color:#ededed;letter-spacing:0.45px;white-space:nowrap;line-height:1;-webkit-text-stroke:0.45px #ededed;">84%</div><div style="position:absolute;left:1209.0px;width:200px;text-align:center;top:647.76px;font-size:18px;font-weight:400;color:#ededed;letter-spacing:0.45px;white-space:nowrap;line-height:1;-webkit-text-stroke:0.45px #ededed;">18%</div><div style="position:absolute;left:1336.0px;width:200px;text-align:center;top:647.76px;font-size:18px;font-weight:400;color:#ededed;letter-spacing:0.45px;white-space:nowrap;line-height:1;-webkit-text-stroke:0.45px #ededed;">83%</div><svg style="position:absolute;left:1508.2px;top:641px;z-index:0" width="30" height="30" viewBox="0 0 30 30" fill="none"><circle cx="15" cy="15" r="15" fill="#000"/><circle cx="15" cy="15" r="14.2" fill="#fff"/><circle cx="15" cy="15" r="12.6" fill="#111"/><circle cx="15" cy="15" r="9.8" stroke="#aaa" stroke-width="1.1"/>
<path d="M15,5.5 L16.1,14.4 L23.2,19.8 L15,16.3 L6.8,19.8 L13.9,14.4 Z" fill="#b5b5b5"/><path d="M15,16.3 L15,14 L16.1,14.4" fill="#777"/></svg><svg style="position:absolute;left:1534.0px;top:641px;z-index:1" width="30" height="30" viewBox="0 0 30 30" fill="none"><circle cx="15" cy="15" r="15" fill="#000"/><circle cx="15" cy="15" r="14.2" fill="#fff"/><circle cx="15" cy="15" r="12.4" fill="#e31937"/>
<g transform="translate(15 15) scale(0.84) translate(-15 -15)"><path d="M7.3,8.9 Q15,6.4 22.7,8.9 L22.3,10.6 Q20.8,11.2 19.5,11.9 Q18,11.4 17.2,11.4 L15,23.5 L12.8,11.4 Q12,11.4 10.5,11.9 Q9.2,11.2 7.7,10.6 Z" fill="#fff"/>
<circle cx="15" cy="10.2" r="0.9" fill="#e31937"/></g></svg><svg style="position:absolute;left:1559.8px;top:641px;z-index:2" width="30" height="30" viewBox="0 0 30 30" fill="none"><circle cx="15" cy="15" r="15" fill="#000"/><circle cx="15" cy="15" r="14.2" fill="#fff"/><circle cx="15" cy="15" r="10.2" stroke="#8a93b5" stroke-width="1.6"/><circle cx="15" cy="15" r="10.2" stroke="#27336a" stroke-width="0.8"/>
<path d="M8.6,9.2 L12.5,20.5 L15,14.2 L17.5,20.5 L21.4,9.2 M11.6,8.2 L15,17 L18.4,8.2" stroke="#27336a" stroke-width="1.5" stroke-linejoin="round"/></svg><div style="position:absolute;left:1643px;top:646px;width:25px;height:20px;box-sizing:border-box;border:1px solid #3a3a3a;border-radius:3px;overflow:hidden;background:linear-gradient(#000 0 33.3%,#dd0000 33.3% 66.6%,#ffce00 66.6%)"></div><div style="position:absolute;left:1649.0px;width:200px;text-align:center;top:647.76px;font-size:18px;font-weight:400;color:#ededed;letter-spacing:0.5px;white-space:nowrap;line-height:1;-webkit-text-stroke:0.55px #ededed;">Jul 23</div><div style="position:absolute;left:1729.0px;width:200px;text-align:center;top:647.76px;font-size:18px;font-weight:400;color:#ededed;letter-spacing:0.3px;white-space:nowrap;line-height:1;-webkit-text-stroke:0.55px #ededed;">22</div><div style="position:absolute;left:670px;top:685.5px;width:1210px;height:1.5px;box-sizing:border-box;background:#262626"></div><div style="position:absolute;left:695px;top:707px;width:20px;height:20px;box-sizing:border-box;border:1.5px solid #2a2a2a;border-radius:5px;background:#171717"></div><div style="position:absolute;left:735.5px;top:708.76px;font-size:18px;font-weight:400;color:#ededed;letter-spacing:0.3px;white-space:nowrap;line-height:1;-webkit-text-stroke:0.55px #ededed;">Which electric car m...</div><div style="position:absolute;left:961.5px;top:702.5px;width:73px;height:30px;box-sizing:border-box;border:2px solid #2b9148;background:#1c2a1f;border-radius:6px"></div><div style="position:absolute;left:898.0px;width:200px;text-align:center;top:708.9px;font-size:15px;font-weight:400;color:#3ddc6a;letter-spacing:0.58px;white-space:nowrap;line-height:1;-webkit-text-stroke:0.3px #3ddc6a;">Quality</div><div style="position:absolute;left:996.0px;width:200px;text-align:center;top:708.76px;font-size:18px;font-weight:400;color:#ededed;letter-spacing:0px;white-space:nowrap;line-height:1;-webkit-text-stroke:0.55px #ededed;">1</div><div style="position:absolute;left:1089.0px;width:200px;text-align:center;top:708.76px;font-size:18px;font-weight:400;color:#ededed;letter-spacing:0.45px;white-space:nowrap;line-height:1;-webkit-text-stroke:0.45px #ededed;">86%</div><div style="position:absolute;left:1209.0px;width:200px;text-align:center;top:708.76px;font-size:18px;font-weight:400;color:#ededed;letter-spacing:0.45px;white-space:nowrap;line-height:1;-webkit-text-stroke:0.45px #ededed;">16%</div><div style="position:absolute;left:1336.0px;width:200px;text-align:center;top:708.76px;font-size:18px;font-weight:400;color:#ededed;letter-spacing:0.45px;white-space:nowrap;line-height:1;-webkit-text-stroke:0.45px #ededed;">85%</div><svg style="position:absolute;left:1508.2px;top:702px;z-index:0" width="30" height="30" viewBox="0 0 30 30" fill="none"><circle cx="15" cy="15" r="15" fill="#000"/><circle cx="15" cy="15" r="14.2" fill="#fff"/><circle cx="15" cy="15" r="12.4" fill="#e31937"/>
<g transform="translate(15 15) scale(0.84) translate(-15 -15)"><path d="M7.3,8.9 Q15,6.4 22.7,8.9 L22.3,10.6 Q20.8,11.2 19.5,11.9 Q18,11.4 17.2,11.4 L15,23.5 L12.8,11.4 Q12,11.4 10.5,11.9 Q9.2,11.2 7.7,10.6 Z" fill="#fff"/>
<circle cx="15" cy="10.2" r="0.9" fill="#e31937"/></g></svg><svg style="position:absolute;left:1534.0px;top:702px;z-index:1" width="30" height="30" viewBox="0 0 30 30" fill="none"><circle cx="15" cy="15" r="15" fill="#000"/><circle cx="15" cy="15" r="14.2" fill="#fff"/>
<path d="M5.4,12.7 L9.2,12.7 Q10.5,12.7 10.5,13.85 Q10.5,15 9.2,15 L6.6,15 M9.2,15 Q10.7,15 10.7,16.15 Q10.7,17.3 9.2,17.3 L5.4,17.3 M12,12.7 L14.5,15 L17,12.7 M14.5,15 L14.5,17.3 M18.6,12.7 L22.1,12.7 Q24.6,12.7 24.6,15 Q24.6,17.3 22.1,17.3 L18.6,17.3" stroke="#e31937" stroke-width="1.05" stroke-linejoin="round"/></svg><svg style="position:absolute;left:1559.8px;top:702px;z-index:2" width="30" height="30" viewBox="0 0 30 30" fill="none"><circle cx="15" cy="15" r="15" fill="#000"/><circle cx="15" cy="15" r="14.2" fill="#fff"/><circle cx="15" cy="15" r="12.4" fill="#8c8c8c"/><circle cx="15" cy="15" r="11.3" fill="#4a4a4a"/>
<path d="M10.3,6.9 l1.3,-0.8 M14.4,5.5 l1.2,0 M18.4,6.1 l1.3,0.8" stroke="#e5e5e5" stroke-width="1.1"/>
<circle cx="15" cy="15" r="7.6" fill="#fff"/>
<path d="M15,15 L15,7.4 A7.6,7.6 0 0 0 7.4,15 Z" fill="#1c69d4"/><path d="M15,15 L15,22.6 A7.6,7.6 0 0 0 22.6,15 Z" fill="#1c69d4"/></svg><div style="position:absolute;left:1643px;top:707px;width:25px;height:20px;box-sizing:border-box;border:1px solid #3a3a3a;border-radius:3px;overflow:hidden;background:linear-gradient(#000 0 33.3%,#dd0000 33.3% 66.6%,#ffce00 66.6%)"></div><div style="position:absolute;left:1649.0px;width:200px;text-align:center;top:708.76px;font-size:18px;font-weight:400;color:#ededed;letter-spacing:0.5px;white-space:nowrap;line-height:1;-webkit-text-stroke:0.55px #ededed;">Jul 23</div><div style="position:absolute;left:1729.0px;width:200px;text-align:center;top:708.76px;font-size:18px;font-weight:400;color:#ededed;letter-spacing:0.3px;white-space:nowrap;line-height:1;-webkit-text-stroke:0.55px #ededed;">22</div><div style="position:absolute;left:670px;top:746.5px;width:1210px;height:1.5px;box-sizing:border-box;background:#262626"></div><div style="position:absolute;left:695px;top:768px;width:20px;height:20px;box-sizing:border-box;border:1.5px solid #2a2a2a;border-radius:5px;background:#171717"></div><div style="position:absolute;left:735.5px;top:769.76px;font-size:18px;font-weight:400;color:#ededed;letter-spacing:0.3px;white-space:nowrap;line-height:1;-webkit-text-stroke:0.55px #ededed;">What are the best el...</div><div style="position:absolute;left:955.0px;top:763.5px;width:86px;height:30px;box-sizing:border-box;border:2px solid #2a6ca6;background:#192431;border-radius:6px"></div><div style="position:absolute;left:898.0px;width:200px;text-align:center;top:769.9px;font-size:15px;font-weight:400;color:#4aa3ff;letter-spacing:0.58px;white-space:nowrap;line-height:1;-webkit-text-stroke:0.3px #4aa3ff;">Branding</div><div style="position:absolute;left:996.0px;width:200px;text-align:center;top:769.76px;font-size:18px;font-weight:400;color:#ededed;letter-spacing:0px;white-space:nowrap;line-height:1;-webkit-text-stroke:0.55px #ededed;">2</div><div style="position:absolute;left:1089.0px;width:200px;text-align:center;top:769.76px;font-size:18px;font-weight:400;color:#ededed;letter-spacing:0.45px;white-space:nowrap;line-height:1;-webkit-text-stroke:0.45px #ededed;">38%</div><div style="position:absolute;left:1209.0px;width:200px;text-align:center;top:769.76px;font-size:18px;font-weight:400;color:#ededed;letter-spacing:0.45px;white-space:nowrap;line-height:1;-webkit-text-stroke:0.45px #ededed;">5%</div><div style="position:absolute;left:1336.0px;width:200px;text-align:center;top:769.76px;font-size:18px;font-weight:400;color:#ededed;letter-spacing:0.45px;white-space:nowrap;line-height:1;-webkit-text-stroke:0.45px #ededed;">92%</div><svg style="position:absolute;left:1508.2px;top:763px;z-index:0" width="30" height="30" viewBox="0 0 30 30" fill="none"><circle cx="15" cy="15" r="15" fill="#000"/><circle cx="15" cy="15" r="14.2" fill="#fff"/><circle cx="15" cy="15" r="12.6" fill="#111"/><circle cx="15" cy="15" r="9.8" stroke="#aaa" stroke-width="1.1"/>
<path d="M15,5.5 L16.1,14.4 L23.2,19.8 L15,16.3 L6.8,19.8 L13.9,14.4 Z" fill="#b5b5b5"/><path d="M15,16.3 L15,14 L16.1,14.4" fill="#777"/></svg><svg style="position:absolute;left:1534.0px;top:763px;z-index:1" width="30" height="30" viewBox="0 0 30 30" fill="none"><circle cx="15" cy="15" r="15" fill="#000"/><circle cx="15" cy="15" r="14.2" fill="#fff"/><circle cx="15" cy="15" r="12.4" fill="#e31937"/>
<g transform="translate(15 15) scale(0.84) translate(-15 -15)"><path d="M7.3,8.9 Q15,6.4 22.7,8.9 L22.3,10.6 Q20.8,11.2 19.5,11.9 Q18,11.4 17.2,11.4 L15,23.5 L12.8,11.4 Q12,11.4 10.5,11.9 Q9.2,11.2 7.7,10.6 Z" fill="#fff"/>
<circle cx="15" cy="10.2" r="0.9" fill="#e31937"/></g></svg><svg style="position:absolute;left:1559.8px;top:763px;z-index:2" width="30" height="30" viewBox="0 0 30 30" fill="none"><circle cx="15" cy="15" r="15" fill="#000"/><circle cx="15" cy="15" r="14.2" fill="#fff"/><circle cx="15" cy="15" r="12.4" fill="#8c8c8c"/><circle cx="15" cy="15" r="11.3" fill="#4a4a4a"/>
<path d="M10.3,6.9 l1.3,-0.8 M14.4,5.5 l1.2,0 M18.4,6.1 l1.3,0.8" stroke="#e5e5e5" stroke-width="1.1"/>
<circle cx="15" cy="15" r="7.6" fill="#fff"/>
<path d="M15,15 L15,7.4 A7.6,7.6 0 0 0 7.4,15 Z" fill="#1c69d4"/><path d="M15,15 L15,22.6 A7.6,7.6 0 0 0 22.6,15 Z" fill="#1c69d4"/></svg><div style="position:absolute;left:1643px;top:768px;width:25px;height:20px;box-sizing:border-box;border:1px solid #3a3a3a;border-radius:3px;overflow:hidden;background:linear-gradient(#000 0 33.3%,#dd0000 33.3% 66.6%,#ffce00 66.6%)"></div><div style="position:absolute;left:1649.0px;width:200px;text-align:center;top:769.76px;font-size:18px;font-weight:400;color:#ededed;letter-spacing:0.5px;white-space:nowrap;line-height:1;-webkit-text-stroke:0.55px #ededed;">Jul 23</div><div style="position:absolute;left:1729.0px;width:200px;text-align:center;top:769.76px;font-size:18px;font-weight:400;color:#ededed;letter-spacing:0.3px;white-space:nowrap;line-height:1;-webkit-text-stroke:0.55px #ededed;">27</div><div style="position:absolute;left:670px;top:807.5px;width:1210px;height:1.5px;box-sizing:border-box;background:#262626"></div><div style="position:absolute;left:695px;top:829px;width:20px;height:20px;box-sizing:border-box;border:1.5px solid #2a2a2a;border-radius:5px;background:#171717"></div><div style="position:absolute;left:735.5px;top:830.76px;font-size:18px;font-weight:400;color:#ededed;letter-spacing:0.3px;white-space:nowrap;line-height:1;-webkit-text-stroke:0.55px #ededed;">What electric car ma...</div><div style="position:absolute;left:996.0px;width:200px;text-align:center;top:830.76px;font-size:18px;font-weight:400;color:#ededed;letter-spacing:0px;white-space:nowrap;line-height:1;-webkit-text-stroke:0.55px #ededed;">1</div><div style="position:absolute;left:1089.0px;width:200px;text-align:center;top:830.76px;font-size:18px;font-weight:400;color:#ededed;letter-spacing:0.45px;white-space:nowrap;line-height:1;-webkit-text-stroke:0.45px #ededed;">61%</div><div style="position:absolute;left:1209.0px;width:200px;text-align:center;top:830.76px;font-size:18px;font-weight:400;color:#ededed;letter-spacing:0.45px;white-space:nowrap;line-height:1;-webkit-text-stroke:0.45px #ededed;">14%</div><div style="position:absolute;left:1336.0px;width:200px;text-align:center;top:830.76px;font-size:18px;font-weight:400;color:#ededed;letter-spacing:0.45px;white-space:nowrap;line-height:1;-webkit-text-stroke:0.45px #ededed;">89%</div><svg style="position:absolute;left:1508.2px;top:824px;z-index:0" width="30" height="30" viewBox="0 0 30 30" fill="none"><circle cx="15" cy="15" r="15" fill="#000"/><circle cx="15" cy="15" r="14.2" fill="#fff"/><circle cx="15" cy="15" r="12.4" fill="#e31937"/>
<g transform="translate(15 15) scale(0.84) translate(-15 -15)"><path d="M7.3,8.9 Q15,6.4 22.7,8.9 L22.3,10.6 Q20.8,11.2 19.5,11.9 Q18,11.4 17.2,11.4 L15,23.5 L12.8,11.4 Q12,11.4 10.5,11.9 Q9.2,11.2 7.7,10.6 Z" fill="#fff"/>
<circle cx="15" cy="10.2" r="0.9" fill="#e31937"/></g></svg><svg style="position:absolute;left:1534.0px;top:824px;z-index:1" width="30" height="30" viewBox="0 0 30 30" fill="none"><circle cx="15" cy="15" r="15" fill="#000"/><circle cx="15" cy="15" r="14.2" fill="#fff"/>
<path d="M5.4,12.7 L9.2,12.7 Q10.5,12.7 10.5,13.85 Q10.5,15 9.2,15 L6.6,15 M9.2,15 Q10.7,15 10.7,16.15 Q10.7,17.3 9.2,17.3 L5.4,17.3 M12,12.7 L14.5,15 L17,12.7 M14.5,15 L14.5,17.3 M18.6,12.7 L22.1,12.7 Q24.6,12.7 24.6,15 Q24.6,17.3 22.1,17.3 L18.6,17.3" stroke="#e31937" stroke-width="1.05" stroke-linejoin="round"/></svg><svg style="position:absolute;left:1559.8px;top:824px;z-index:2" width="30" height="30" viewBox="0 0 30 30" fill="none"><circle cx="15" cy="15" r="15" fill="#000"/><circle cx="15" cy="15" r="14.2" fill="#fff"/><circle cx="15" cy="15" r="12.4" fill="#8c8c8c"/><circle cx="15" cy="15" r="11.3" fill="#4a4a4a"/>
<path d="M10.3,6.9 l1.3,-0.8 M14.4,5.5 l1.2,0 M18.4,6.1 l1.3,0.8" stroke="#e5e5e5" stroke-width="1.1"/>
<circle cx="15" cy="15" r="7.6" fill="#fff"/>
<path d="M15,15 L15,7.4 A7.6,7.6 0 0 0 7.4,15 Z" fill="#1c69d4"/><path d="M15,15 L15,22.6 A7.6,7.6 0 0 0 22.6,15 Z" fill="#1c69d4"/></svg><div style="position:absolute;left:1643px;top:829px;width:25px;height:20px;box-sizing:border-box;border:1px solid #3a3a3a;border-radius:3px;overflow:hidden;background:linear-gradient(#000 0 33.3%,#dd0000 33.3% 66.6%,#ffce00 66.6%)"></div><div style="position:absolute;left:1649.0px;width:200px;text-align:center;top:830.76px;font-size:18px;font-weight:400;color:#ededed;letter-spacing:0.5px;white-space:nowrap;line-height:1;-webkit-text-stroke:0.55px #ededed;">Jul 23</div><div style="position:absolute;left:1729.0px;width:200px;text-align:center;top:830.76px;font-size:18px;font-weight:400;color:#ededed;letter-spacing:0.3px;white-space:nowrap;line-height:1;-webkit-text-stroke:0.55px #ededed;">29</div><div style="position:absolute;left:670px;top:868.5px;width:1210px;height:1.5px;box-sizing:border-box;background:#262626"></div><div style="position:absolute;left:695px;top:890px;width:20px;height:20px;box-sizing:border-box;border:1.5px solid #2a2a2a;border-radius:5px;background:#171717"></div><div style="position:absolute;left:735.5px;top:891.76px;font-size:18px;font-weight:400;color:#ededed;letter-spacing:0.3px;white-space:nowrap;line-height:1;-webkit-text-stroke:0.55px #ededed;">What is the best ele...</div><div style="position:absolute;left:968.5px;top:885.5px;width:59px;height:30px;box-sizing:border-box;border:2px solid #5f50c4;background:#221e33;border-radius:6px"></div><div style="position:absolute;left:898.0px;width:200px;text-align:center;top:891.9px;font-size:15px;font-weight:400;color:#8b78ff;letter-spacing:0.58px;white-space:nowrap;line-height:1;-webkit-text-stroke:0.3px #8b78ff;">Price</div><div style="position:absolute;left:996.0px;width:200px;text-align:center;top:891.76px;font-size:18px;font-weight:400;color:#ededed;letter-spacing:0px;white-space:nowrap;line-height:1;-webkit-text-stroke:0.55px #ededed;">1</div><div style="position:absolute;left:1089.0px;width:200px;text-align:center;top:891.76px;font-size:18px;font-weight:400;color:#ededed;letter-spacing:0.45px;white-space:nowrap;line-height:1;-webkit-text-stroke:0.45px #ededed;">67%</div><div style="position:absolute;left:1209.0px;width:200px;text-align:center;top:891.76px;font-size:18px;font-weight:400;color:#ededed;letter-spacing:0.45px;white-space:nowrap;line-height:1;-webkit-text-stroke:0.45px #ededed;">14%</div><div style="position:absolute;left:1336.0px;width:200px;text-align:center;top:891.76px;font-size:18px;font-weight:400;color:#ededed;letter-spacing:0.45px;white-space:nowrap;line-height:1;-webkit-text-stroke:0.45px #ededed;">91%</div><svg style="position:absolute;left:1521.1px;top:885px;z-index:0" width="30" height="30" viewBox="0 0 30 30" fill="none"><circle cx="15" cy="15" r="15" fill="#000"/><circle cx="15" cy="15" r="14.2" fill="#fff"/><circle cx="15" cy="15" r="12.4" fill="#e31937"/>
<g transform="translate(15 15) scale(0.84) translate(-15 -15)"><path d="M7.3,8.9 Q15,6.4 22.7,8.9 L22.3,10.6 Q20.8,11.2 19.5,11.9 Q18,11.4 17.2,11.4 L15,23.5 L12.8,11.4 Q12,11.4 10.5,11.9 Q9.2,11.2 7.7,10.6 Z" fill="#fff"/>
<circle cx="15" cy="10.2" r="0.9" fill="#e31937"/></g></svg><svg style="position:absolute;left:1546.9px;top:885px;z-index:1" width="30" height="30" viewBox="0 0 30 30" fill="none"><circle cx="15" cy="15" r="15" fill="#000"/><circle cx="15" cy="15" r="14.2" fill="#fff"/>
<path d="M5.4,12.7 L9.2,12.7 Q10.5,12.7 10.5,13.85 Q10.5,15 9.2,15 L6.6,15 M9.2,15 Q10.7,15 10.7,16.15 Q10.7,17.3 9.2,17.3 L5.4,17.3 M12,12.7 L14.5,15 L17,12.7 M14.5,15 L14.5,17.3 M18.6,12.7 L22.1,12.7 Q24.6,12.7 24.6,15 Q24.6,17.3 22.1,17.3 L18.6,17.3" stroke="#e31937" stroke-width="1.05" stroke-linejoin="round"/></svg><div style="position:absolute;left:1643px;top:890px;width:25px;height:20px;box-sizing:border-box;border:1px solid #3a3a3a;border-radius:3px;overflow:hidden;background:linear-gradient(#000 0 33.3%,#dd0000 33.3% 66.6%,#ffce00 66.6%)"></div><div style="position:absolute;left:1649.0px;width:200px;text-align:center;top:891.76px;font-size:18px;font-weight:400;color:#ededed;letter-spacing:0.5px;white-space:nowrap;line-height:1;-webkit-text-stroke:0.55px #ededed;">Jul 23</div><div style="position:absolute;left:1729.0px;width:200px;text-align:center;top:891.76px;font-size:18px;font-weight:400;color:#ededed;letter-spacing:0.3px;white-space:nowrap;line-height:1;-webkit-text-stroke:0.55px #ededed;">15</div><div style="position:absolute;left:670px;top:929.5px;width:1210px;height:1.5px;box-sizing:border-box;background:#262626"></div><div style="position:absolute;left:695px;top:951px;width:20px;height:20px;box-sizing:border-box;border:1.5px solid #2a2a2a;border-radius:5px;background:#171717"></div><div style="position:absolute;left:735.5px;top:952.76px;font-size:18px;font-weight:400;color:#ededed;letter-spacing:0.3px;white-space:nowrap;line-height:1;-webkit-text-stroke:0.55px #ededed;">What is the best ele...</div><div style="position:absolute;left:961.5px;top:946.5px;width:73px;height:30px;box-sizing:border-box;border:2px solid #2b9148;background:#1c2a1f;border-radius:6px"></div><div style="position:absolute;left:898.0px;width:200px;text-align:center;top:952.9px;font-size:15px;font-weight:400;color:#3ddc6a;letter-spacing:0.58px;white-space:nowrap;line-height:1;-webkit-text-stroke:0.3px #3ddc6a;">Quality</div><div style="position:absolute;left:996.0px;width:200px;text-align:center;top:952.76px;font-size:18px;font-weight:400;color:#ededed;letter-spacing:0px;white-space:nowrap;line-height:1;-webkit-text-stroke:0.55px #ededed;">3</div><div style="position:absolute;left:1089.0px;width:200px;text-align:center;top:952.76px;font-size:18px;font-weight:400;color:#ededed;letter-spacing:0.45px;white-space:nowrap;line-height:1;-webkit-text-stroke:0.45px #ededed;">76%</div><div style="position:absolute;left:1209.0px;width:200px;text-align:center;top:952.76px;font-size:18px;font-weight:400;color:#ededed;letter-spacing:0.45px;white-space:nowrap;line-height:1;-webkit-text-stroke:0.45px #ededed;">11%</div><div style="position:absolute;left:1336.0px;width:200px;text-align:center;top:952.76px;font-size:18px;font-weight:400;color:#ededed;letter-spacing:0.45px;white-space:nowrap;line-height:1;-webkit-text-stroke:0.45px #ededed;">90%</div><svg style="position:absolute;left:1508.2px;top:946px;z-index:0" width="30" height="30" viewBox="0 0 30 30" fill="none"><circle cx="15" cy="15" r="15" fill="#000"/><circle cx="15" cy="15" r="14.2" fill="#fff"/><circle cx="15" cy="15" r="10.2" stroke="#8a93b5" stroke-width="1.6"/><circle cx="15" cy="15" r="10.2" stroke="#27336a" stroke-width="0.8"/>
<path d="M8.6,9.2 L12.5,20.5 L15,14.2 L17.5,20.5 L21.4,9.2 M11.6,8.2 L15,17 L18.4,8.2" stroke="#27336a" stroke-width="1.5" stroke-linejoin="round"/></svg><svg style="position:absolute;left:1534.0px;top:946px;z-index:1" width="30" height="30" viewBox="0 0 30 30" fill="none"><circle cx="15" cy="15" r="15" fill="#000"/><circle cx="15" cy="15" r="14.2" fill="#fff"/><circle cx="15" cy="15" r="12.4" fill="#8c8c8c"/><circle cx="15" cy="15" r="11.3" fill="#4a4a4a"/>
<path d="M10.3,6.9 l1.3,-0.8 M14.4,5.5 l1.2,0 M18.4,6.1 l1.3,0.8" stroke="#e5e5e5" stroke-width="1.1"/>
<circle cx="15" cy="15" r="7.6" fill="#fff"/>
<path d="M15,15 L15,7.4 A7.6,7.6 0 0 0 7.4,15 Z" fill="#1c69d4"/><path d="M15,15 L15,22.6 A7.6,7.6 0 0 0 22.6,15 Z" fill="#1c69d4"/></svg><svg style="position:absolute;left:1559.8px;top:946px;z-index:2" width="30" height="30" viewBox="0 0 30 30" fill="none"><circle cx="15" cy="15" r="15" fill="#000"/><circle cx="15" cy="15" r="14.2" fill="#fff"/><circle cx="15" cy="15" r="12.4" fill="#e31937"/>
<g transform="translate(15 15) scale(0.84) translate(-15 -15)"><path d="M7.3,8.9 Q15,6.4 22.7,8.9 L22.3,10.6 Q20.8,11.2 19.5,11.9 Q18,11.4 17.2,11.4 L15,23.5 L12.8,11.4 Q12,11.4 10.5,11.9 Q9.2,11.2 7.7,10.6 Z" fill="#fff"/>
<circle cx="15" cy="10.2" r="0.9" fill="#e31937"/></g></svg><div style="position:absolute;left:1643px;top:951px;width:25px;height:20px;box-sizing:border-box;border:1px solid #3a3a3a;border-radius:3px;overflow:hidden;background:linear-gradient(#000 0 33.3%,#dd0000 33.3% 66.6%,#ffce00 66.6%)"></div><div style="position:absolute;left:1649.0px;width:200px;text-align:center;top:952.76px;font-size:18px;font-weight:400;color:#ededed;letter-spacing:0.5px;white-space:nowrap;line-height:1;-webkit-text-stroke:0.55px #ededed;">Jul 23</div><div style="position:absolute;left:1729.0px;width:200px;text-align:center;top:952.76px;font-size:18px;font-weight:400;color:#ededed;letter-spacing:0.3px;white-space:nowrap;line-height:1;-webkit-text-stroke:0.55px #ededed;">17</div>
</body></html>
